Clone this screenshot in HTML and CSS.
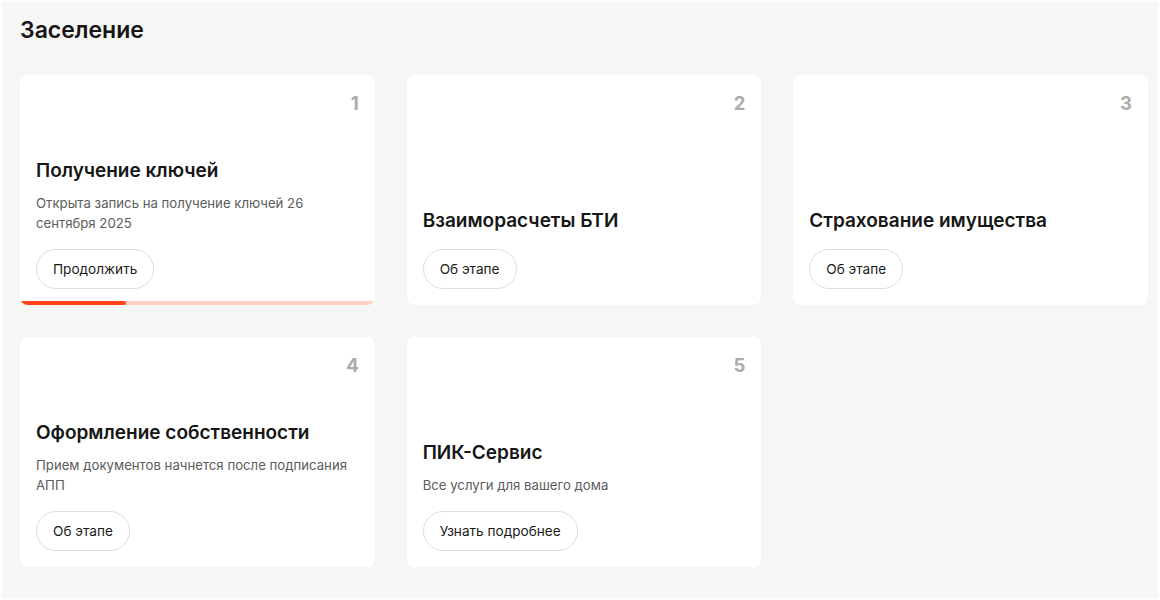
FILE: index.html
```html
<!DOCTYPE html>
<html lang="ru">
<head>
<meta charset="utf-8">
<link rel="stylesheet" href="styles.css">
</head>
<body>
<main class="panel">
  <h1 class="heading">Заселение</h1>
  <div class="grid">
    <section class="card">
      <div class="num">1</div>
      <div class="body">
        <h2 class="title">Получение ключей</h2>
        <p class="desc">Открыта запись на получение ключей 26 сентября 2025</p>
        <button class="btn">Продолжить</button>
      </div>
      <div class="progress"><div class="progress-fill" style="width:30%"></div></div>
    </section>
    <section class="card">
      <div class="num">2</div>
      <div class="body">
        <h2 class="title">Взаиморасчеты БТИ</h2>
        <button class="btn">Об этапе</button>
      </div>
    </section>
    <section class="card">
      <div class="num">3</div>
      <div class="body">
        <h2 class="title">Страхование имущества</h2>
        <button class="btn">Об этапе</button>
      </div>
    </section>
    <section class="card">
      <div class="num">4</div>
      <div class="body">
        <h2 class="title">Оформление собственности</h2>
        <p class="desc">Прием документов начнется после подписания АПП</p>
        <button class="btn">Об этапе</button>
      </div>
    </section>
    <section class="card">
      <div class="num">5</div>
      <div class="body">
        <h2 class="title">ПИК-Сервис</h2>
        <p class="desc">Все услуги для вашего дома</p>
        <button class="btn">Узнать подробнее</button>
      </div>
    </section>
  </div>
</main>
</body>
</html>
```
FILE: styles.css
```css
* { box-sizing: border-box; }
html, body { margin: 0; padding: 0; background: #ffffff; }
body {
  font-family: Inter, "Noto Sans", "Liberation Sans", sans-serif;
  color: #161616;
  padding: 3px;
}
.panel {
  background: #f6f6f4;
  height: 594px;
  padding: 13px 9px 0 17px;
  box-shadow: 0 0 3px 1px #f6f6f4;
}
.heading {
  margin: 0 0 31px;
  font-size: 23px;
  line-height: 28px;
  font-weight: 560;
  letter-spacing: 0;
}
.grid {
  display: grid;
  grid-template-columns: repeat(3, 1fr);
  grid-auto-rows: 230px;
  gap: 32px;
}
.card {
  position: relative;
  background: #ffffff;
  border-radius: 8px;
  padding: 16px;
  display: flex;
  flex-direction: column;
  overflow: hidden;
}
.num {
  text-align: right;
  font-size: 18.5px;
  line-height: 24px;
  font-weight: 700;
  color: #ababab;
  padding-right: 0;
}
.body {
  margin-top: auto;
  display: flex;
  flex-direction: column;
  align-items: flex-start;
}
.title {
  margin: 0;
  font-size: 19px;
  line-height: 24px;
  font-weight: 560;
  letter-spacing: 0;
}
.desc {
  margin: 10px 0 0;
  font-size: 13.2px;
  line-height: 20px;
  color: #5c5c5c;
}
.btn {
  margin-top: 16px;
  height: 40px;
  padding: 0 16px;
  border: 1px solid #dedede;
  border-radius: 20px;
  background: #ffffff;
  font-family: inherit;
  font-size: 13.6px;
  color: #1a1a1a;
}
.progress {
  position: absolute;
  left: 0;
  right: 0;
  bottom: 0;
  height: 4px;
  background: #ffd1c5;
}
.progress-fill {
  height: 100%;
  background: #ff4517;
  border-radius: 0 2px 2px 0;
}
```
